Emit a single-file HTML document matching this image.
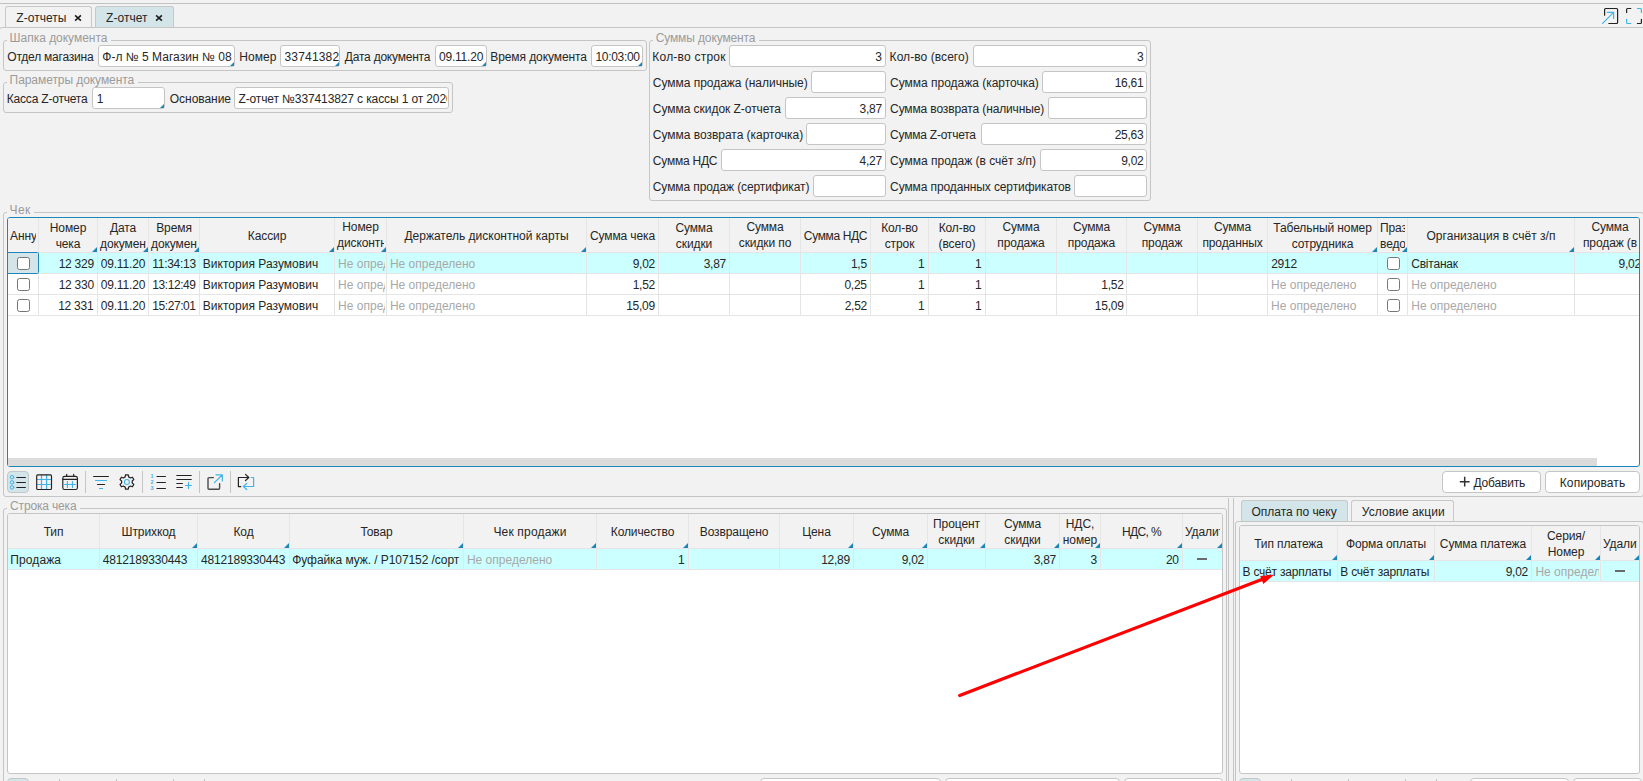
<!DOCTYPE html>
<html lang="ru"><head><meta charset="utf-8"><title>Z-отчет</title>
<style>
html,body{margin:0;padding:0}
body{width:1643px;height:781px;overflow:hidden;background:#f2f2f2;position:relative;font-family:"Liberation Sans",sans-serif;font-size:12px;color:#262626}
body div,body span,body svg{position:absolute;box-sizing:border-box;display:block}
</style></head><body>
<div style="left:0px;top:3px;width:1643px;height:1px;background:#c2c2c2"></div>
<div style="left:-1px;top:27px;width:1650px;height:800px;border:1px solid #c6c6c6;border-radius:3px;"></div>
<div style="left:5px;top:6px;width:87px;height:21px;background:#f2f2f2;border:1px solid #c8c8c8;border-bottom:none;border-radius:3px 3px 0 0;"></div>
<div style="left:95px;top:6px;width:79px;height:21px;background:#d3e5e8;border:1px solid #c6c9ca;border-bottom:none;border-radius:3px 3px 0 0;"></div>
<span style="top:10px;line-height:16px;height:16px;color:#262626;white-space:nowrap;letter-spacing:0.05px;left:16.25px;">Z-отчеты</span>
<span style="top:10px;line-height:16px;height:16px;color:#262626;white-space:nowrap;letter-spacing:0.042px;left:106.05px;">Z-отчет</span>
<svg style="left:72.8px;top:12.600000000000001px" width="10" height="10" viewBox="0 0 10 10"><path d="M2.1 2.4 L7.9 7.6 M7.9 2.4 L2.1 7.6" stroke="#1a1a1a" stroke-width="1.55" fill="none"/></svg>
<svg style="left:154px;top:12.600000000000001px" width="10" height="10" viewBox="0 0 10 10"><path d="M2.1 2.4 L7.9 7.6 M7.9 2.4 L2.1 7.6" stroke="#1a1a1a" stroke-width="1.55" fill="none"/></svg>
<svg style="left:1598px;top:4px" width="45" height="24" viewBox="1598 4 45 24" fill="none" stroke-width="1.2" stroke-linecap="round" stroke-linejoin="round">
<path d="M1604.6 15.2 V9.5 a1 1 0 0 1 1 -1 H1616.6 a1 1 0 0 1 1 1 V22.5 a1 1 0 0 1 -1 1 H1608.8" stroke="#222222"/>
<path d="M1602.6 23.4 L1613.6 12.4 M1607.4 12.4 H1613.6 V18.4" stroke="#40b4e8"/>
<path d="M1626.6 12.4 V9.5 a1 1 0 0 1 1 -1 H1630.8" stroke="#222222"/>
<path d="M1637.4 8.5 H1640.4 a1 1 0 0 1 1 1 V12.4" stroke="#40b4e8"/>
<path d="M1626.6 19.3 V22.5 a1 1 0 0 0 1 1 H1630.8" stroke="#40b4e8"/>
<path d="M1637.4 23.5 H1640.4 a1 1 0 0 0 1 -1 V19.3" stroke="#222222"/>
</svg>
<div style="left:3px;top:40px;width:644px;height:31px;border:1px solid #c5c5c5;border-radius:3px;"></div>
<span style="left:7px;top:30px;line-height:16px;height:16px;padding:0 3.5px 0 2.60px;background:#f2f2f2;color:#9b9b9b;letter-spacing:-0.025px;white-space:nowrap">Шапка документа</span>
<span style="top:49px;line-height:16px;height:16px;color:#262626;white-space:nowrap;letter-spacing:-0.219px;left:7.3px;">Отдел магазина</span>
<div style="left:98px;top:45px;width:137px;height:22px;background:#fff;border:1px solid #c5c5c5;border-radius:3px;"></div>
<span style="left:102.25px;top:49px;width:131.25px;overflow:hidden;line-height:16px;height:16px;white-space:nowrap;letter-spacing:0.024px">Ф-л № 5 Магазин № 08</span>
<div style="left:230px;top:62px;width:0;height:0;border-left:4px solid transparent;border-bottom:4px solid #1d86b8"></div>
<span style="top:49px;line-height:16px;height:16px;color:#262626;white-space:nowrap;letter-spacing:0.05px;left:239.3px;">Номер</span>
<div style="left:280px;top:45px;width:60px;height:22px;background:#fff;border:1px solid #c5c5c5;border-radius:3px;"></div>
<span style="left:284.50px;top:49px;width:54.00px;overflow:hidden;line-height:16px;height:16px;white-space:nowrap;letter-spacing:0.179px">337413827</span>
<div style="left:335px;top:62px;width:0;height:0;border-left:4px solid transparent;border-bottom:4px solid #1d86b8"></div>
<span style="top:49px;line-height:16px;height:16px;color:#262626;white-space:nowrap;letter-spacing:-0.215px;left:344.8px;">Дата документа</span>
<div style="left:435px;top:45px;width:52px;height:22px;background:#fff;border:1px solid #c5c5c5;border-radius:3px;"></div>
<span style="left:439.00px;top:49px;width:46.50px;overflow:hidden;line-height:16px;height:16px;white-space:nowrap;letter-spacing:-0.214px">09.11.20</span>
<div style="left:482px;top:62px;width:0;height:0;border-left:4px solid transparent;border-bottom:4px solid #1d86b8"></div>
<span style="top:49px;line-height:16px;height:16px;color:#262626;white-space:nowrap;letter-spacing:-0.093px;left:490.3px;">Время документа</span>
<div style="left:591px;top:45px;width:52px;height:22px;background:#fff;border:1px solid #c5c5c5;border-radius:3px;"></div>
<span style="left:595.45px;top:49px;width:46.05px;overflow:hidden;line-height:16px;height:16px;white-space:nowrap;letter-spacing:-0.314px">10:03:00</span>
<div style="left:638px;top:62px;width:0;height:0;border-left:4px solid transparent;border-bottom:4px solid #1d86b8"></div>
<div style="left:3px;top:82px;width:450px;height:31px;border:1px solid #c5c5c5;border-radius:3px;"></div>
<span style="left:7px;top:72px;line-height:16px;height:16px;padding:0 3.5px 0 2.60px;background:#f2f2f2;color:#9b9b9b;letter-spacing:-0.064px;white-space:nowrap">Параметры документа</span>
<span style="top:91px;line-height:16px;height:16px;color:#262626;white-space:nowrap;letter-spacing:-0.2px;left:6.8px;">Касса Z-отчета</span>
<div style="left:92px;top:87px;width:73px;height:22px;background:#fff;border:1px solid #c5c5c5;border-radius:3px;"></div>
<span style="left:96.75px;top:91px;width:66.75px;overflow:hidden;line-height:16px;height:16px;white-space:nowrap;letter-spacing:-0.100px">1</span>
<div style="left:160px;top:104px;width:0;height:0;border-left:4px solid transparent;border-bottom:4px solid #1d86b8"></div>
<span style="top:91px;line-height:16px;height:16px;color:#262626;white-space:nowrap;letter-spacing:-0.038px;left:169.8px;">Основание</span>
<div style="left:234px;top:87px;width:215px;height:22px;background:#fff;border:1px solid #c5c5c5;border-radius:3px;"></div>
<span style="left:238.45px;top:91px;width:209.05px;overflow:hidden;line-height:16px;height:16px;white-space:nowrap;letter-spacing:-0.116px">Z-отчет №337413827 с кассы 1 от 2020-11-09</span>
<div style="left:649px;top:40px;width:502px;height:161px;border:1px solid #c5c5c5;border-radius:3px;"></div>
<span style="left:653px;top:30px;line-height:16px;height:16px;padding:0 3.5px 0 2.70px;background:#f2f2f2;color:#9b9b9b;letter-spacing:-0.121px;white-space:nowrap">Суммы документа</span>
<span style="top:49px;line-height:16px;height:16px;color:#262626;white-space:nowrap;letter-spacing:0.223px;left:652.3px;">Кол-во строк</span>
<div style="left:729px;top:45px;width:157px;height:22px;background:#fff;border:1px solid #c5c5c5;border-radius:3px;"></div>
<span style="top:49px;line-height:16px;height:16px;color:#262626;white-space:nowrap;letter-spacing:-0.25px;left:875.35px;">3</span>
<span style="top:49px;line-height:16px;height:16px;color:#262626;white-space:nowrap;letter-spacing:0.065px;left:889.6px;">Кол-во (всего)</span>
<div style="left:973px;top:45px;width:174px;height:22px;background:#fff;border:1px solid #c5c5c5;border-radius:3px;"></div>
<span style="top:49px;line-height:16px;height:16px;color:#262626;white-space:nowrap;letter-spacing:-0.25px;left:1136.95px;">3</span>
<span style="top:75px;line-height:16px;height:16px;color:#262626;white-space:nowrap;letter-spacing:-0.024px;left:652.8px;">Сумма продажа (наличные)</span>
<div style="left:811px;top:71px;width:75px;height:22px;background:#fff;border:1px solid #c5c5c5;border-radius:3px;"></div>
<span style="top:75px;line-height:16px;height:16px;color:#262626;white-space:nowrap;letter-spacing:-0.017px;left:890.1px;">Сумма продажа (карточка)</span>
<div style="left:1042px;top:71px;width:105px;height:22px;background:#fff;border:1px solid #c5c5c5;border-radius:3px;"></div>
<span style="top:75px;line-height:16px;height:16px;color:#262626;white-space:nowrap;letter-spacing:-0.25px;left:1114.7px;">16,61</span>
<span style="top:101px;line-height:16px;height:16px;color:#262626;white-space:nowrap;letter-spacing:-0.04px;left:652.8px;">Сумма скидок Z-отчета</span>
<div style="left:785px;top:97px;width:101px;height:22px;background:#fff;border:1px solid #c5c5c5;border-radius:3px;"></div>
<span style="top:101px;line-height:16px;height:16px;color:#262626;white-space:nowrap;letter-spacing:-0.25px;left:859.6px;">3,87</span>
<span style="top:101px;line-height:16px;height:16px;color:#262626;white-space:nowrap;letter-spacing:-0.131px;left:890.1px;">Сумма возврата (наличные)</span>
<div style="left:1048px;top:97px;width:99px;height:22px;background:#fff;border:1px solid #c5c5c5;border-radius:3px;"></div>
<span style="top:127px;line-height:16px;height:16px;color:#262626;white-space:nowrap;letter-spacing:-0.023px;left:652.8px;">Сумма возврата (карточка)</span>
<div style="left:806px;top:123px;width:80px;height:22px;background:#fff;border:1px solid #c5c5c5;border-radius:3px;"></div>
<span style="top:127px;line-height:16px;height:16px;color:#262626;white-space:nowrap;letter-spacing:-0.223px;left:890.1px;">Сумма Z-отчета</span>
<div style="left:981px;top:123px;width:166px;height:22px;background:#fff;border:1px solid #c5c5c5;border-radius:3px;"></div>
<span style="top:127px;line-height:16px;height:16px;color:#262626;white-space:nowrap;letter-spacing:-0.25px;left:1114.7px;">25,63</span>
<span style="top:153px;line-height:16px;height:16px;color:#262626;white-space:nowrap;letter-spacing:-0.225px;left:652.8px;">Сумма НДС</span>
<div style="left:721px;top:149px;width:165px;height:22px;background:#fff;border:1px solid #c5c5c5;border-radius:3px;"></div>
<span style="top:153px;line-height:16px;height:16px;color:#262626;white-space:nowrap;letter-spacing:-0.25px;left:859.6px;">4,27</span>
<span style="top:153px;line-height:16px;height:16px;color:#262626;white-space:nowrap;letter-spacing:-0.015px;left:890.1px;">Сумма продаж (в счёт з/п)</span>
<div style="left:1040px;top:149px;width:107px;height:22px;background:#fff;border:1px solid #c5c5c5;border-radius:3px;"></div>
<span style="top:153px;line-height:16px;height:16px;color:#262626;white-space:nowrap;letter-spacing:-0.25px;left:1121.2px;">9,02</span>
<span style="top:179px;line-height:16px;height:16px;color:#262626;white-space:nowrap;letter-spacing:-0.098px;left:652.8px;">Сумма продаж (сертификат)</span>
<div style="left:813px;top:175px;width:73px;height:22px;background:#fff;border:1px solid #c5c5c5;border-radius:3px;"></div>
<span style="top:179px;line-height:16px;height:16px;color:#262626;white-space:nowrap;letter-spacing:-0.106px;left:890.1px;">Сумма проданных сертификатов</span>
<div style="left:1074px;top:175px;width:73px;height:22px;background:#fff;border:1px solid #c5c5c5;border-radius:3px;"></div>
<div style="left:3px;top:212px;width:1641px;height:285px;border:1px solid #c5c5c5;border-radius:3px;"></div>
<span style="left:7px;top:202px;line-height:16px;height:16px;padding:0 3.5px 0 2.60px;background:#f2f2f2;color:#9b9b9b;letter-spacing:0.400px;white-space:nowrap">Чек</span>
<div style="left:7px;top:217px;width:1633px;height:250px;background:#fff;border:1px solid #1d86b8;border-radius:3px;"></div>
<div style="left:8px;top:218px;width:1631px;height:34px;background:#f2f2f2;border-radius:2px 2px 0 0;"></div>
<div style="left:8px;top:252px;width:1631px;height:1px;background:#e5e5e5"></div>
<div style="left:8px;top:253px;width:1631px;height:20px;background:#ccffff;"></div>
<div style="left:8px;top:273px;width:1631px;height:1px;background:#e5e5e5"></div>
<div style="left:8px;top:294px;width:1631px;height:1px;background:#e5e5e5"></div>
<div style="left:8px;top:315px;width:1631px;height:1px;background:#e5e5e5"></div>
<div style="left:38px;top:218px;width:1px;height:98px;background:#e5e5e5"></div>
<div style="left:97px;top:218px;width:1px;height:98px;background:#e5e5e5"></div>
<div style="left:148px;top:218px;width:1px;height:98px;background:#e5e5e5"></div>
<div style="left:199px;top:218px;width:1px;height:98px;background:#e5e5e5"></div>
<div style="left:334px;top:218px;width:1px;height:98px;background:#e5e5e5"></div>
<div style="left:386px;top:218px;width:1px;height:98px;background:#e5e5e5"></div>
<div style="left:586px;top:218px;width:1px;height:98px;background:#e5e5e5"></div>
<div style="left:658px;top:218px;width:1px;height:98px;background:#e5e5e5"></div>
<div style="left:729px;top:218px;width:1px;height:98px;background:#e5e5e5"></div>
<div style="left:800px;top:218px;width:1px;height:98px;background:#e5e5e5"></div>
<div style="left:870px;top:218px;width:1px;height:98px;background:#e5e5e5"></div>
<div style="left:928px;top:218px;width:1px;height:98px;background:#e5e5e5"></div>
<div style="left:985px;top:218px;width:1px;height:98px;background:#e5e5e5"></div>
<div style="left:1056px;top:218px;width:1px;height:98px;background:#e5e5e5"></div>
<div style="left:1126px;top:218px;width:1px;height:98px;background:#e5e5e5"></div>
<div style="left:1197px;top:218px;width:1px;height:98px;background:#e5e5e5"></div>
<div style="left:1267px;top:218px;width:1px;height:98px;background:#e5e5e5"></div>
<div style="left:1377px;top:218px;width:1px;height:98px;background:#e5e5e5"></div>
<div style="left:1407px;top:218px;width:1px;height:98px;background:#e5e5e5"></div>
<div style="left:1574px;top:218px;width:1px;height:98px;background:#e5e5e5"></div>
<div style="left:8px;top:228px;width:28px;height:16px;overflow:hidden;line-height:16px;color:#262626;letter-spacing:-0.1px"><div style="position:static;width:30px;box-sizing:border-box;padding:0 2px;text-align:center"><div style="position:static;height:16px;white-space:nowrap">Аннулирован</div></div></div>
<div style="left:39px;top:220px;width:56px;height:32px;overflow:hidden;line-height:16px;color:#262626;letter-spacing:-0.1px"><div style="position:static;width:58px;box-sizing:border-box;padding:0 2px;text-align:center"><div style="position:static;height:16px;white-space:nowrap">Номер</div><div style="position:static;height:16px;white-space:nowrap">чека</div></div></div>
<div style="left:92px;top:247px;width:0;height:0;border-left:5px solid transparent;border-bottom:5px solid #1d86b8"></div>
<div style="left:98px;top:220px;width:48px;height:32px;overflow:hidden;line-height:16px;color:#262626;letter-spacing:-0.1px"><div style="position:static;width:50px;box-sizing:border-box;padding:0 2px;text-align:center"><div style="position:static;height:16px;white-space:nowrap">Дата</div><div style="position:static;height:16px;white-space:nowrap">документа</div></div></div>
<div style="left:143px;top:247px;width:0;height:0;border-left:5px solid transparent;border-bottom:5px solid #1d86b8"></div>
<div style="left:149px;top:220px;width:48px;height:32px;overflow:hidden;line-height:16px;color:#262626;letter-spacing:-0.1px"><div style="position:static;width:50px;box-sizing:border-box;padding:0 2px;text-align:center"><div style="position:static;height:16px;white-space:nowrap">Время</div><div style="position:static;height:16px;white-space:nowrap">документа</div></div></div>
<div style="left:194px;top:247px;width:0;height:0;border-left:5px solid transparent;border-bottom:5px solid #1d86b8"></div>
<div style="left:200px;top:228px;width:132px;height:16px;overflow:hidden;line-height:16px;color:#262626;letter-spacing:-0.1px"><div style="position:static;width:134px;box-sizing:border-box;padding:0 2px;text-align:center"><div style="position:static;height:16px;white-space:nowrap">Кассир</div></div></div>
<div style="left:329px;top:247px;width:0;height:0;border-left:5px solid transparent;border-bottom:5px solid #1d86b8"></div>
<div style="left:335px;top:219px;width:49px;height:32px;overflow:hidden;line-height:16px;color:#262626;letter-spacing:-0.1px"><div style="position:static;width:51px;box-sizing:border-box;padding:0 2px;text-align:center"><div style="position:static;height:16px;white-space:nowrap">Номер</div><div style="position:static;height:16px;white-space:nowrap">дисконтной</div></div></div>
<div style="left:381px;top:247px;width:0;height:0;border-left:5px solid transparent;border-bottom:5px solid #1d86b8"></div>
<div style="left:387px;top:228px;width:197px;height:16px;overflow:hidden;line-height:16px;color:#262626;letter-spacing:0.0px"><div style="position:static;width:199px;box-sizing:border-box;padding:0 2px;text-align:center"><div style="position:static;height:16px;white-space:nowrap">Держатель дисконтной карты</div></div></div>
<div style="left:581px;top:247px;width:0;height:0;border-left:5px solid transparent;border-bottom:5px solid #1d86b8"></div>
<div style="left:587px;top:228px;width:69px;height:16px;overflow:hidden;line-height:16px;color:#262626;letter-spacing:-0.1px"><div style="position:static;width:71px;box-sizing:border-box;padding:0 2px;text-align:center"><div style="position:static;height:16px;white-space:nowrap">Сумма чека</div></div></div>
<div style="left:659px;top:220px;width:68px;height:32px;overflow:hidden;line-height:16px;color:#262626;letter-spacing:-0.1px"><div style="position:static;width:70px;box-sizing:border-box;padding:0 2px;text-align:center"><div style="position:static;height:16px;white-space:nowrap">Сумма</div><div style="position:static;height:16px;white-space:nowrap">скидки</div></div></div>
<div style="left:730px;top:219px;width:68px;height:32px;overflow:hidden;line-height:16px;color:#262626;letter-spacing:-0.1px"><div style="position:static;width:70px;box-sizing:border-box;padding:0 2px;text-align:center"><div style="position:static;height:16px;white-space:nowrap">Сумма</div><div style="position:static;height:16px;white-space:nowrap">скидки по</div></div></div>
<div style="left:801px;top:228px;width:67px;height:16px;overflow:hidden;line-height:16px;color:#262626;letter-spacing:-0.35px"><div style="position:static;width:69px;box-sizing:border-box;padding:0 2px;text-align:center"><div style="position:static;height:16px;white-space:nowrap">Сумма НДС</div></div></div>
<div style="left:871px;top:220px;width:55px;height:32px;overflow:hidden;line-height:16px;color:#262626;letter-spacing:-0.1px"><div style="position:static;width:57px;box-sizing:border-box;padding:0 2px;text-align:center"><div style="position:static;height:16px;white-space:nowrap">Кол-во</div><div style="position:static;height:16px;white-space:nowrap">строк</div></div></div>
<div style="left:929px;top:220px;width:54px;height:32px;overflow:hidden;line-height:16px;color:#262626;letter-spacing:-0.1px"><div style="position:static;width:56px;box-sizing:border-box;padding:0 2px;text-align:center"><div style="position:static;height:16px;white-space:nowrap">Кол-во</div><div style="position:static;height:16px;white-space:nowrap">(всего)</div></div></div>
<div style="left:986px;top:219px;width:68px;height:32px;overflow:hidden;line-height:16px;color:#262626;letter-spacing:-0.1px"><div style="position:static;width:70px;box-sizing:border-box;padding:0 2px;text-align:center"><div style="position:static;height:16px;white-space:nowrap">Сумма</div><div style="position:static;height:16px;white-space:nowrap">продажа</div></div></div>
<div style="left:1057px;top:219px;width:67px;height:32px;overflow:hidden;line-height:16px;color:#262626;letter-spacing:-0.1px"><div style="position:static;width:69px;box-sizing:border-box;padding:0 2px;text-align:center"><div style="position:static;height:16px;white-space:nowrap">Сумма</div><div style="position:static;height:16px;white-space:nowrap">продажа</div></div></div>
<div style="left:1127px;top:219px;width:68px;height:32px;overflow:hidden;line-height:16px;color:#262626;letter-spacing:-0.1px"><div style="position:static;width:70px;box-sizing:border-box;padding:0 2px;text-align:center"><div style="position:static;height:16px;white-space:nowrap">Сумма</div><div style="position:static;height:16px;white-space:nowrap">продаж</div></div></div>
<div style="left:1198px;top:219px;width:67px;height:32px;overflow:hidden;line-height:16px;color:#262626;letter-spacing:-0.1px"><div style="position:static;width:69px;box-sizing:border-box;padding:0 2px;text-align:center"><div style="position:static;height:16px;white-space:nowrap">Сумма</div><div style="position:static;height:16px;white-space:nowrap">проданных</div></div></div>
<div style="left:1268px;top:220px;width:107px;height:32px;overflow:hidden;line-height:16px;color:#262626;letter-spacing:-0.1px"><div style="position:static;width:109px;box-sizing:border-box;padding:0 2px;text-align:center"><div style="position:static;height:16px;white-space:nowrap">Табельный номер</div><div style="position:static;height:16px;white-space:nowrap">сотрудника</div></div></div>
<div style="left:1372px;top:247px;width:0;height:0;border-left:5px solid transparent;border-bottom:5px solid #1d86b8"></div>
<div style="left:1378px;top:220px;width:27px;height:32px;overflow:hidden;line-height:16px;color:#262626;letter-spacing:-0.1px"><div style="position:static;width:29px;box-sizing:border-box;padding:0 2px;text-align:center"><div style="position:static;height:16px;white-space:nowrap">Празд.</div><div style="position:static;height:16px;white-space:nowrap">ведомость</div></div></div>
<div style="left:1402px;top:247px;width:0;height:0;border-left:5px solid transparent;border-bottom:5px solid #1d86b8"></div>
<div style="left:1408px;top:228px;width:164px;height:16px;overflow:hidden;line-height:16px;color:#262626;letter-spacing:0.03px"><div style="position:static;width:166px;box-sizing:border-box;padding:0 2px;text-align:center"><div style="position:static;height:16px;white-space:nowrap">Организация в счёт з/п</div></div></div>
<div style="left:1569px;top:247px;width:0;height:0;border-left:5px solid transparent;border-bottom:5px solid #1d86b8"></div>
<div style="left:1575px;top:219px;width:64px;height:32px;overflow:hidden;line-height:16px;color:#262626;letter-spacing:-0.1px"><div style="position:static;width:70px;box-sizing:border-box;padding:0 2px;text-align:center"><div style="position:static;height:16px;white-space:nowrap">Сумма</div><div style="position:static;height:16px;white-space:nowrap">продаж (в</div></div></div>
<div style="left:7px;top:252px;width:32px;height:22px;background:#d3e5e8;border:1px solid #1d86b8;border-radius:0 1.5px 1.5px 0;"></div>
<div style="left:17px;top:257px;width:13px;height:13px;background:#fff;border:1px solid #767676;border-radius:2.5px;"></div>
<span style="top:256px;line-height:16px;height:16px;color:#262626;white-space:nowrap;letter-spacing:-0.25px;left:58.7px;">12 329</span>
<span style="left:100.70px;top:256px;width:46.80px;overflow:hidden;line-height:16px;height:16px;color:#262626;white-space:nowrap;letter-spacing:-0.171px">09.11.20</span>
<span style="left:152.25px;top:256px;width:46.25px;overflow:hidden;line-height:16px;height:16px;color:#262626;white-space:nowrap;letter-spacing:-0.286px">11:34:13</span>
<span style="left:202.70px;top:256px;width:130.80px;overflow:hidden;line-height:16px;height:16px;color:#262626;white-space:nowrap;letter-spacing:0.032px">Виктория Разумович</span>
<span style="left:338.10px;top:256px;width:47.40px;overflow:hidden;line-height:16px;height:16px;color:#a8a8a8;white-space:nowrap;letter-spacing:0.013px">Не определено</span>
<span style="left:389.90px;top:256px;width:195.60px;overflow:hidden;line-height:16px;height:16px;color:#a8a8a8;white-space:nowrap;letter-spacing:0.013px">Не определено</span>
<span style="top:256px;line-height:16px;height:16px;color:#262626;white-space:nowrap;letter-spacing:-0.25px;left:632.7px;">9,02</span>
<span style="top:256px;line-height:16px;height:16px;color:#262626;white-space:nowrap;letter-spacing:-0.25px;left:703.7px;">3,87</span>
<span style="top:256px;line-height:16px;height:16px;color:#262626;white-space:nowrap;letter-spacing:-0.25px;left:850.95px;">1,5</span>
<span style="top:256px;line-height:16px;height:16px;color:#262626;white-space:nowrap;letter-spacing:-0.25px;left:917.95px;">1</span>
<span style="top:256px;line-height:16px;height:16px;color:#262626;white-space:nowrap;letter-spacing:-0.25px;left:974.95px;">1</span>
<span style="left:1271.20px;top:256px;width:105.30px;overflow:hidden;line-height:16px;height:16px;color:#262626;white-space:nowrap;letter-spacing:-0.250px">2912</span>
<div style="left:1387px;top:257px;width:13px;height:13px;background:#fff;border:1px solid #767676;border-radius:2.5px;"></div>
<span style="left:1411.20px;top:256px;width:162.30px;overflow:hidden;line-height:16px;height:16px;color:#262626;white-space:nowrap;letter-spacing:-0.207px">Світанак</span>
<div style="left:1575px;top:256px;width:64px;height:16px;overflow:hidden"><span style="left:6px;width:60px;text-align:right;line-height:16px;color:#262626;letter-spacing:-0.2px;white-space:nowrap">9,02</span></div>
<div style="left:17px;top:278px;width:13px;height:13px;background:#fff;border:1px solid #767676;border-radius:2.5px;"></div>
<span style="top:277px;line-height:16px;height:16px;color:#262626;white-space:nowrap;letter-spacing:-0.25px;left:58.7px;">12 330</span>
<span style="left:100.70px;top:277px;width:46.80px;overflow:hidden;line-height:16px;height:16px;color:#262626;white-space:nowrap;letter-spacing:-0.171px">09.11.20</span>
<span style="left:152.25px;top:277px;width:46.25px;overflow:hidden;line-height:16px;height:16px;color:#262626;white-space:nowrap;letter-spacing:-0.429px">13:12:49</span>
<span style="left:202.70px;top:277px;width:130.80px;overflow:hidden;line-height:16px;height:16px;color:#262626;white-space:nowrap;letter-spacing:0.032px">Виктория Разумович</span>
<span style="left:338.10px;top:277px;width:47.40px;overflow:hidden;line-height:16px;height:16px;color:#a8a8a8;white-space:nowrap;letter-spacing:0.013px">Не определено</span>
<span style="left:389.90px;top:277px;width:195.60px;overflow:hidden;line-height:16px;height:16px;color:#a8a8a8;white-space:nowrap;letter-spacing:0.013px">Не определено</span>
<span style="top:277px;line-height:16px;height:16px;color:#262626;white-space:nowrap;letter-spacing:-0.25px;left:632.7px;">1,52</span>
<span style="top:277px;line-height:16px;height:16px;color:#262626;white-space:nowrap;letter-spacing:-0.25px;left:844.45px;">0,25</span>
<span style="top:277px;line-height:16px;height:16px;color:#262626;white-space:nowrap;letter-spacing:-0.25px;left:917.95px;">1</span>
<span style="top:277px;line-height:16px;height:16px;color:#262626;white-space:nowrap;letter-spacing:-0.25px;left:974.95px;">1</span>
<span style="top:277px;line-height:16px;height:16px;color:#262626;white-space:nowrap;letter-spacing:-0.25px;left:1101.3px;">1,52</span>
<span style="left:1271.10px;top:277px;width:105.40px;overflow:hidden;line-height:16px;height:16px;color:#a8a8a8;white-space:nowrap;letter-spacing:0.012px">Не определено</span>
<div style="left:1387px;top:278px;width:13px;height:13px;background:#fff;border:1px solid #767676;border-radius:2.5px;"></div>
<span style="left:1411.30px;top:277px;width:162.20px;overflow:hidden;line-height:16px;height:16px;color:#a8a8a8;white-space:nowrap;letter-spacing:0.012px">Не определено</span>
<div style="left:17px;top:299px;width:13px;height:13px;background:#fff;border:1px solid #767676;border-radius:2.5px;"></div>
<span style="top:298px;line-height:16px;height:16px;color:#262626;white-space:nowrap;letter-spacing:-0.25px;left:58.2px;">12 331</span>
<span style="left:100.70px;top:298px;width:46.80px;overflow:hidden;line-height:16px;height:16px;color:#262626;white-space:nowrap;letter-spacing:-0.171px">09.11.20</span>
<span style="left:152.25px;top:298px;width:46.25px;overflow:hidden;line-height:16px;height:16px;color:#262626;white-space:nowrap;letter-spacing:-0.429px">15:27:01</span>
<span style="left:202.70px;top:298px;width:130.80px;overflow:hidden;line-height:16px;height:16px;color:#262626;white-space:nowrap;letter-spacing:0.032px">Виктория Разумович</span>
<span style="left:338.10px;top:298px;width:47.40px;overflow:hidden;line-height:16px;height:16px;color:#a8a8a8;white-space:nowrap;letter-spacing:0.013px">Не определено</span>
<span style="left:389.90px;top:298px;width:195.60px;overflow:hidden;line-height:16px;height:16px;color:#a8a8a8;white-space:nowrap;letter-spacing:0.013px">Не определено</span>
<span style="top:298px;line-height:16px;height:16px;color:#262626;white-space:nowrap;letter-spacing:-0.25px;left:626.2px;">15,09</span>
<span style="top:298px;line-height:16px;height:16px;color:#262626;white-space:nowrap;letter-spacing:-0.25px;left:844.7px;">2,52</span>
<span style="top:298px;line-height:16px;height:16px;color:#262626;white-space:nowrap;letter-spacing:-0.25px;left:917.95px;">1</span>
<span style="top:298px;line-height:16px;height:16px;color:#262626;white-space:nowrap;letter-spacing:-0.25px;left:974.95px;">1</span>
<span style="top:298px;line-height:16px;height:16px;color:#262626;white-space:nowrap;letter-spacing:-0.25px;left:1094.8px;">15,09</span>
<span style="left:1271.10px;top:298px;width:105.40px;overflow:hidden;line-height:16px;height:16px;color:#a8a8a8;white-space:nowrap;letter-spacing:0.012px">Не определено</span>
<div style="left:1387px;top:299px;width:13px;height:13px;background:#fff;border:1px solid #767676;border-radius:2.5px;"></div>
<span style="left:1411.30px;top:298px;width:162.20px;overflow:hidden;line-height:16px;height:16px;color:#a8a8a8;white-space:nowrap;letter-spacing:0.012px">Не определено</span>
<div style="left:8px;top:458px;width:1589px;height:8px;background:#dbdbdb;"></div>
<div style="left:7px;top:471px;width:22px;height:22px;background:#d3e5e8;border:1px solid #c0c8ca;border-radius:4px;"></div>
<div style="left:85px;top:471px;width:1px;height:22px;background:#c5c5c5"></div>
<div style="left:142px;top:471px;width:1px;height:22px;background:#c5c5c5"></div>
<div style="left:199px;top:471px;width:1px;height:22px;background:#c5c5c5"></div>
<div style="left:230px;top:471px;width:1px;height:22px;background:#c5c5c5"></div>
<svg style="left:0;top:468px" width="270" height="28" viewBox="0 468 270 28" fill="none" stroke-width="1.2" stroke-linecap="round" stroke-linejoin="round">
<g stroke="#40b4e8" stroke-width="1"><circle cx="12" cy="477.2" r="1.75"/><circle cx="12" cy="482.4" r="1.75"/><circle cx="12" cy="487.4" r="1.75"/></g>
<path d="M16.8 477.5 H25.4 M16.8 482.5 H25.4 M16.8 487.5 H25.4" stroke="#222222" stroke-width="1.1"/>
<path d="M41.5 475 V489.5 M46.6 475 V489.5 M36.8 479.5 H51.5 M36.8 484.5 H51.5" stroke="#40b4e8"/>
<rect x="36.7" y="474.9" width="14.8" height="14.6" rx="1" stroke="#222222" stroke-width="1.15"/>
<path d="M67.4 481.6 V487.4 M72.5 481.6 V487.4 M64.6 484.5 H75.4" stroke="#40b4e8"/>
<path d="M66.7 474.4 V476.4 M73.7 474.4 V476.4 M62.8 479.4 H77.4" stroke="#222222"/>
<rect x="62.8" y="476.4" width="14.6" height="13.1" rx="1.8" stroke="#222222" stroke-width="1.15"/>
<path d="M93.6 476.5 H108.4 M97.5 484.5 H104.6" stroke="#222222"/>
<path d="M95.6 480.5 H106.5 M99.5 488.5 H102.6" stroke="#40b4e8"/>
<circle cx="126.9" cy="482" r="2.5" stroke="#40b4e8" stroke-width="1.05"/>
<path id="gear" stroke="#222222" d="M125.18 476.88 L125.53 474.83 L128.27 474.83 L128.62 476.88 L130.47 477.95 L132.43 477.23 L133.79 479.60 L132.19 480.93 L132.19 483.07 L133.79 484.40 L132.43 486.77 L130.47 486.05 L128.62 487.12 L128.27 489.17 L125.53 489.17 L125.18 487.12 L123.33 486.05 L121.37 486.77 L120.01 484.40 L121.61 483.07 L121.61 480.93 L120.01 479.60 L121.37 477.23 L123.33 477.95 Z"/>
<path d="M157 476.5 H165.4 M157 482.5 H165.4 M157 488.5 H165.4" stroke="#222222"/>
<path d="M176.8 475.5 H191.2 M176.8 479.5 H191.2 M176.8 483.5 H182.4 M176.8 487.5 H182.4" stroke="#222222"/>
<path d="M185.6 485.5 H191.4 M188.5 482.6 V488.4" stroke="#40b4e8"/>
<path d="M213.4 477.6 H209 a1 1 0 0 0 -1 1 V488.2 a1 1 0 0 0 1 1 H218.6 a1 1 0 0 0 1 -1 V483.6" stroke="#4a4a4a" stroke-width="1.4"/>
<path d="M214.4 482.6 L222.3 474.8 M216 474.8 H222.3 V481" stroke="#40b4e8"/>
<path d="M240.8 486.6 H238.4 V477.5 H248.6 M245.5 474.4 L248.8 477.5 L245.5 480.5" stroke="#222222"/>
<path d="M251.2 477.5 H253.6 V486.5 H243.6 M246.7 483.5 L243.4 486.5 L246.7 489.5" stroke="#40b4e8"/>
</svg>
<span style="left:150.4px;top:473.1px;font-size:5.4px;line-height:6px;font-weight:bold;color:#40b4e8">1</span>
<span style="left:150.4px;top:479.1px;font-size:5.4px;line-height:6px;font-weight:bold;color:#40b4e8">2</span>
<span style="left:150.4px;top:485.1px;font-size:5.4px;line-height:6px;font-weight:bold;color:#40b4e8">3</span>
<div style="left:1442px;top:471px;width:99px;height:22px;background:#fff;border:1px solid #c5c5c5;border-radius:4px;"></div>
<div style="left:1545px;top:471px;width:95px;height:22px;background:#fff;border:1px solid #c5c5c5;border-radius:4px;"></div>
<svg style="left:1459px;top:476px" width="12" height="12" viewBox="0 0 12 12"><path d="M5.7 0.8 V10.6 M0.8 5.7 H10.6" stroke="#333" stroke-width="1.5" fill="none"/></svg>
<span style="top:475px;line-height:16px;height:16px;color:#262626;white-space:nowrap;letter-spacing:-0.179px;left:1473.5px;">Добавить</span>
<span style="top:475px;line-height:16px;height:16px;color:#262626;white-space:nowrap;letter-spacing:0.083px;left:1559.8px;">Копировать</span>
<div style="left:3px;top:508px;width:1224px;height:300px;border:1px solid #c5c5c5;border-radius:3px;"></div>
<span style="left:7px;top:498px;line-height:16px;height:16px;padding:0 3.5px 0 3.10px;background:#f2f2f2;color:#9b9b9b;letter-spacing:-0.165px;white-space:nowrap">Строка чека</span>
<div style="left:7px;top:513px;width:1216px;height:261px;background:#fff;border:1px solid #c5c5c5;border-radius:3px;"></div>
<div style="left:8px;top:514px;width:1214px;height:34px;background:#f2f2f2;border-radius:2px 2px 0 0;"></div>
<div style="left:8px;top:548px;width:1214px;height:1px;background:#e5e5e5"></div>
<div style="left:8px;top:549px;width:1214px;height:20px;background:#ccffff;"></div>
<div style="left:8px;top:569px;width:1214px;height:1px;background:#e5e5e5"></div>
<div style="left:99px;top:514px;width:1px;height:56px;background:#e5e5e5"></div>
<div style="left:197px;top:514px;width:1px;height:56px;background:#e5e5e5"></div>
<div style="left:289px;top:514px;width:1px;height:56px;background:#e5e5e5"></div>
<div style="left:463px;top:514px;width:1px;height:56px;background:#e5e5e5"></div>
<div style="left:596px;top:514px;width:1px;height:56px;background:#e5e5e5"></div>
<div style="left:688px;top:514px;width:1px;height:56px;background:#e5e5e5"></div>
<div style="left:779px;top:514px;width:1px;height:56px;background:#e5e5e5"></div>
<div style="left:853px;top:514px;width:1px;height:56px;background:#e5e5e5"></div>
<div style="left:927px;top:514px;width:1px;height:56px;background:#e5e5e5"></div>
<div style="left:985px;top:514px;width:1px;height:56px;background:#e5e5e5"></div>
<div style="left:1059px;top:514px;width:1px;height:56px;background:#e5e5e5"></div>
<div style="left:1100px;top:514px;width:1px;height:56px;background:#e5e5e5"></div>
<div style="left:1182px;top:514px;width:1px;height:56px;background:#e5e5e5"></div>
<div style="left:8px;top:524px;width:89px;height:16px;overflow:hidden;line-height:16px;color:#262626;letter-spacing:-0.1px"><div style="position:static;width:91px;box-sizing:border-box;padding:0 2px;text-align:center"><div style="position:static;height:16px;white-space:nowrap">Тип</div></div></div>
<div style="left:100px;top:524px;width:95px;height:16px;overflow:hidden;line-height:16px;color:#262626;letter-spacing:-0.1px"><div style="position:static;width:97px;box-sizing:border-box;padding:0 2px;text-align:center"><div style="position:static;height:16px;white-space:nowrap">Штрихкод</div></div></div>
<div style="left:192px;top:543px;width:0;height:0;border-left:5px solid transparent;border-bottom:5px solid #1d86b8"></div>
<div style="left:198px;top:524px;width:89px;height:16px;overflow:hidden;line-height:16px;color:#262626;letter-spacing:-0.1px"><div style="position:static;width:91px;box-sizing:border-box;padding:0 2px;text-align:center"><div style="position:static;height:16px;white-space:nowrap">Код</div></div></div>
<div style="left:284px;top:543px;width:0;height:0;border-left:5px solid transparent;border-bottom:5px solid #1d86b8"></div>
<div style="left:290px;top:524px;width:171px;height:16px;overflow:hidden;line-height:16px;color:#262626;letter-spacing:-0.1px"><div style="position:static;width:173px;box-sizing:border-box;padding:0 2px;text-align:center"><div style="position:static;height:16px;white-space:nowrap">Товар</div></div></div>
<div style="left:458px;top:543px;width:0;height:0;border-left:5px solid transparent;border-bottom:5px solid #1d86b8"></div>
<div style="left:464px;top:524px;width:130px;height:16px;overflow:hidden;line-height:16px;color:#262626;letter-spacing:0.17px"><div style="position:static;width:132px;box-sizing:border-box;padding:0 2px;text-align:center"><div style="position:static;height:16px;white-space:nowrap">Чек продажи</div></div></div>
<div style="left:591px;top:543px;width:0;height:0;border-left:5px solid transparent;border-bottom:5px solid #1d86b8"></div>
<div style="left:597px;top:524px;width:89px;height:16px;overflow:hidden;line-height:16px;color:#262626;letter-spacing:-0.1px"><div style="position:static;width:91px;box-sizing:border-box;padding:0 2px;text-align:center"><div style="position:static;height:16px;white-space:nowrap">Количество</div></div></div>
<div style="left:683px;top:543px;width:0;height:0;border-left:5px solid transparent;border-bottom:5px solid #1d86b8"></div>
<div style="left:689px;top:524px;width:88px;height:16px;overflow:hidden;line-height:16px;color:#262626;letter-spacing:-0.1px"><div style="position:static;width:90px;box-sizing:border-box;padding:0 2px;text-align:center"><div style="position:static;height:16px;white-space:nowrap">Возвращено</div></div></div>
<div style="left:780px;top:524px;width:71px;height:16px;overflow:hidden;line-height:16px;color:#262626;letter-spacing:-0.1px"><div style="position:static;width:73px;box-sizing:border-box;padding:0 2px;text-align:center"><div style="position:static;height:16px;white-space:nowrap">Цена</div></div></div>
<div style="left:848px;top:543px;width:0;height:0;border-left:5px solid transparent;border-bottom:5px solid #1d86b8"></div>
<div style="left:854px;top:524px;width:71px;height:16px;overflow:hidden;line-height:16px;color:#262626;letter-spacing:-0.1px"><div style="position:static;width:73px;box-sizing:border-box;padding:0 2px;text-align:center"><div style="position:static;height:16px;white-space:nowrap">Сумма</div></div></div>
<div style="left:922px;top:543px;width:0;height:0;border-left:5px solid transparent;border-bottom:5px solid #1d86b8"></div>
<div style="left:928px;top:516px;width:55px;height:32px;overflow:hidden;line-height:16px;color:#262626;letter-spacing:-0.1px"><div style="position:static;width:57px;box-sizing:border-box;padding:0 2px;text-align:center"><div style="position:static;height:16px;white-space:nowrap">Процент</div><div style="position:static;height:16px;white-space:nowrap">скидки</div></div></div>
<div style="left:980px;top:543px;width:0;height:0;border-left:5px solid transparent;border-bottom:5px solid #1d86b8"></div>
<div style="left:986px;top:516px;width:71px;height:32px;overflow:hidden;line-height:16px;color:#262626;letter-spacing:-0.1px"><div style="position:static;width:73px;box-sizing:border-box;padding:0 2px;text-align:center"><div style="position:static;height:16px;white-space:nowrap">Сумма</div><div style="position:static;height:16px;white-space:nowrap">скидки</div></div></div>
<div style="left:1054px;top:543px;width:0;height:0;border-left:5px solid transparent;border-bottom:5px solid #1d86b8"></div>
<div style="left:1060px;top:516px;width:38px;height:32px;overflow:hidden;line-height:16px;color:#262626;letter-spacing:-0.1px"><div style="position:static;width:40px;box-sizing:border-box;padding:0 2px;text-align:center"><div style="position:static;height:16px;white-space:nowrap">НДС,</div><div style="position:static;height:16px;white-space:nowrap">номер</div></div></div>
<div style="left:1095px;top:543px;width:0;height:0;border-left:5px solid transparent;border-bottom:5px solid #1d86b8"></div>
<div style="left:1101px;top:524px;width:79px;height:16px;overflow:hidden;line-height:16px;color:#262626;letter-spacing:-0.6px"><div style="position:static;width:81px;box-sizing:border-box;padding:0 2px;text-align:center"><div style="position:static;height:16px;white-space:nowrap">НДС, %</div></div></div>
<div style="left:1177px;top:543px;width:0;height:0;border-left:5px solid transparent;border-bottom:5px solid #1d86b8"></div>
<div style="left:1183px;top:524px;width:37px;height:16px;overflow:hidden;line-height:16px;color:#262626;letter-spacing:-0.1px"><div style="position:static;width:39px;box-sizing:border-box;padding:0 2px;text-align:center"><div style="position:static;height:16px;white-space:nowrap">Удалить</div></div></div>
<div style="left:1217px;top:543px;width:0;height:0;border-left:5px solid transparent;border-bottom:5px solid #1d86b8"></div>
<span style="left:10.20px;top:552px;width:88.30px;overflow:hidden;line-height:16px;height:16px;color:#262626;white-space:nowrap;letter-spacing:0.125px">Продажа</span>
<span style="left:102.75px;top:552px;width:93.75px;overflow:hidden;line-height:16px;height:16px;color:#262626;white-space:nowrap;letter-spacing:-0.167px">4812189330443</span>
<span style="left:200.95px;top:552px;width:87.55px;overflow:hidden;line-height:16px;height:16px;color:#262626;white-space:nowrap;letter-spacing:-0.183px">4812189330443</span>
<span style="left:292.25px;top:552px;width:170.25px;overflow:hidden;line-height:16px;height:16px;color:#262626;white-space:nowrap;letter-spacing:-0.076px">Фуфайка муж. / Р107152 /сорт</span>
<span style="left:466.90px;top:552px;width:128.60px;overflow:hidden;line-height:16px;height:16px;color:#a8a8a8;white-space:nowrap;letter-spacing:0.012px">Не определено</span>
<span style="top:552px;line-height:16px;height:16px;color:#262626;white-space:nowrap;letter-spacing:-0.25px;left:677.95px;">1</span>
<span style="top:552px;line-height:16px;height:16px;color:#262626;white-space:nowrap;letter-spacing:-0.25px;left:821.2px;">12,89</span>
<span style="top:552px;line-height:16px;height:16px;color:#262626;white-space:nowrap;letter-spacing:-0.25px;left:901.7px;">9,02</span>
<span style="top:552px;line-height:16px;height:16px;color:#262626;white-space:nowrap;letter-spacing:-0.25px;left:1033.7px;">3,87</span>
<span style="top:552px;line-height:16px;height:16px;color:#262626;white-space:nowrap;letter-spacing:-0.25px;left:1090.45px;">3</span>
<span style="top:552px;line-height:16px;height:16px;color:#262626;white-space:nowrap;letter-spacing:-0.25px;left:1165.95px;">20</span>
<div style="left:1197px;top:558px;width:10px;height:2px;background:#6a6a6a"></div>
<div style="left:1228px;top:498px;width:1px;height:283px;background:#c5c5c5"></div>
<div style="left:1233px;top:498px;width:1px;height:283px;background:#c5c5c5"></div>
<div style="left:1241px;top:500px;width:107px;height:22px;background:#d3e5e8;border:1px solid #c6c9ca;border-bottom:none;border-radius:3px 3px 0 0;"></div>
<div style="left:1351px;top:500px;width:103px;height:22px;background:#f2f2f2;border:1px solid #c8c8c8;border-bottom:none;border-radius:3px 3px 0 0;"></div>
<div style="left:1235px;top:521px;width:409px;height:270px;border:1px solid #c5c5c5;border-radius:3px;"></div>
<span style="top:504px;line-height:16px;height:16px;color:#262626;white-space:nowrap;letter-spacing:-0.023px;left:1251.5px;">Оплата по чеку</span>
<span style="top:504px;line-height:16px;height:16px;color:#262626;white-space:nowrap;letter-spacing:0.079px;left:1361.75px;">Условие акции</span>
<div style="left:1239px;top:525px;width:401px;height:249px;background:#fff;border:1px solid #c5c5c5;border-radius:3px;"></div>
<div style="left:1240px;top:526px;width:399px;height:34px;background:#f2f2f2;border-radius:2px 2px 0 0;"></div>
<div style="left:1240px;top:560px;width:399px;height:1px;background:#e5e5e5"></div>
<div style="left:1240px;top:561px;width:399px;height:20px;background:#ccffff;"></div>
<div style="left:1240px;top:581px;width:399px;height:1px;background:#e5e5e5"></div>
<div style="left:1337px;top:526px;width:1px;height:56px;background:#e5e5e5"></div>
<div style="left:1434px;top:526px;width:1px;height:56px;background:#e5e5e5"></div>
<div style="left:1531px;top:526px;width:1px;height:56px;background:#e5e5e5"></div>
<div style="left:1600px;top:526px;width:1px;height:56px;background:#e5e5e5"></div>
<div style="left:1240px;top:536px;width:95px;height:16px;overflow:hidden;line-height:16px;color:#262626;letter-spacing:-0.1px"><div style="position:static;width:97px;box-sizing:border-box;padding:0 2px;text-align:center"><div style="position:static;height:16px;white-space:nowrap">Тип платежа</div></div></div>
<div style="left:1332px;top:555px;width:0;height:0;border-left:5px solid transparent;border-bottom:5px solid #1d86b8"></div>
<div style="left:1338px;top:536px;width:94px;height:16px;overflow:hidden;line-height:16px;color:#262626;letter-spacing:-0.1px"><div style="position:static;width:96px;box-sizing:border-box;padding:0 2px;text-align:center"><div style="position:static;height:16px;white-space:nowrap">Форма оплаты</div></div></div>
<div style="left:1429px;top:555px;width:0;height:0;border-left:5px solid transparent;border-bottom:5px solid #1d86b8"></div>
<div style="left:1435px;top:536px;width:94px;height:16px;overflow:hidden;line-height:16px;color:#262626;letter-spacing:-0.1px"><div style="position:static;width:96px;box-sizing:border-box;padding:0 2px;text-align:center"><div style="position:static;height:16px;white-space:nowrap">Сумма платежа</div></div></div>
<div style="left:1526px;top:555px;width:0;height:0;border-left:5px solid transparent;border-bottom:5px solid #1d86b8"></div>
<div style="left:1532px;top:528px;width:66px;height:32px;overflow:hidden;line-height:16px;color:#262626;letter-spacing:-0.1px"><div style="position:static;width:68px;box-sizing:border-box;padding:0 2px;text-align:center"><div style="position:static;height:16px;white-space:nowrap">Серия/</div><div style="position:static;height:16px;white-space:nowrap">Номер</div></div></div>
<div style="left:1595px;top:555px;width:0;height:0;border-left:5px solid transparent;border-bottom:5px solid #1d86b8"></div>
<div style="left:1601px;top:536px;width:36px;height:16px;overflow:hidden;line-height:16px;color:#262626;letter-spacing:-0.1px"><div style="position:static;width:38px;box-sizing:border-box;padding:0 2px;text-align:center"><div style="position:static;height:16px;white-space:nowrap">Удалить</div></div></div>
<div style="left:1634px;top:555px;width:0;height:0;border-left:5px solid transparent;border-bottom:5px solid #1d86b8"></div>
<span style="left:1242.50px;top:564px;width:94.00px;overflow:hidden;line-height:16px;height:16px;color:#262626;white-space:nowrap;letter-spacing:-0.214px">В счёт зарплаты</span>
<span style="left:1340.20px;top:564px;width:93.30px;overflow:hidden;line-height:16px;height:16px;color:#262626;white-space:nowrap;letter-spacing:-0.193px">В счёт зарплаты</span>
<span style="top:564px;line-height:16px;height:16px;color:#262626;white-space:nowrap;letter-spacing:-0.25px;left:1505.7px;">9,02</span>
<span style="left:1535.40px;top:564px;width:64.10px;overflow:hidden;line-height:16px;height:16px;color:#a8a8a8;white-space:nowrap;letter-spacing:0.012px">Не определено</span>
<div style="left:1615px;top:570px;width:10px;height:2px;background:#6a6a6a"></div>
<div style="left:7px;top:778px;width:22px;height:10px;background:#d3e5e8;border:1px solid #c0c8ca;border-radius:4px;"></div>
<div style="left:59px;top:779px;width:1px;height:4px;background:#c5c5c5"></div>
<div style="left:116px;top:779px;width:1px;height:4px;background:#c5c5c5"></div>
<div style="left:173px;top:779px;width:1px;height:4px;background:#c5c5c5"></div>
<div style="left:204px;top:779px;width:1px;height:4px;background:#c5c5c5"></div>
<div style="left:760px;top:778px;width:181px;height:10px;background:#fff;border:1px solid #c5c5c5;border-radius:4px;"></div>
<div style="left:945px;top:778px;width:175px;height:10px;background:#fff;border:1px solid #c5c5c5;border-radius:4px;"></div>
<div style="left:1124px;top:778px;width:99px;height:10px;background:#fff;border:1px solid #c5c5c5;border-radius:4px;"></div>
<div style="left:1239px;top:778px;width:22px;height:10px;background:#d3e5e8;border:1px solid #c0c8ca;border-radius:4px;"></div>
<div style="left:1291px;top:779px;width:1px;height:4px;background:#c5c5c5"></div>
<div style="left:1348px;top:779px;width:1px;height:4px;background:#c5c5c5"></div>
<div style="left:1405px;top:779px;width:1px;height:4px;background:#c5c5c5"></div>
<div style="left:1436px;top:779px;width:1px;height:4px;background:#c5c5c5"></div>
<div style="left:1470px;top:778px;width:99px;height:10px;background:#fff;border:1px solid #c5c5c5;border-radius:4px;"></div>
<div style="left:1573px;top:778px;width:69px;height:10px;background:#fff;border:1px solid #c5c5c5;border-radius:4px;"></div>
<svg style="left:940px;top:560px" width="350" height="150" viewBox="940 560 350 150"><path d="M959.7 695.5 L1263 578.9" stroke="#ff0000" stroke-width="3.2" stroke-linecap="round" fill="none"/><path d="M1274.1 574.8 L1260.2 575.9 L1263.3 584.1 Z" fill="#ff0000"/></svg>
</body></html>
